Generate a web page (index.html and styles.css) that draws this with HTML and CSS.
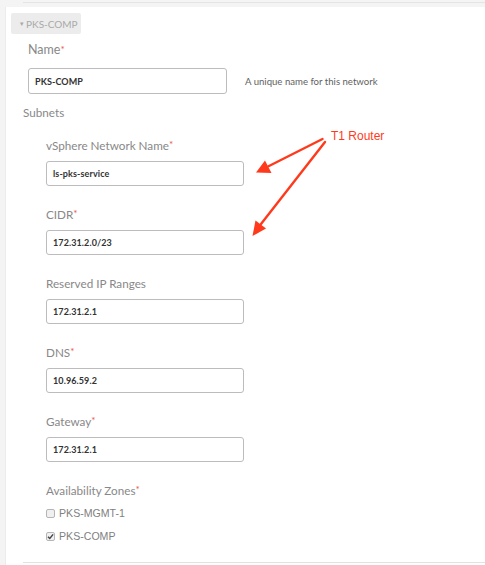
FILE: index.html
```html
<!DOCTYPE html>
<html>
<head>
<meta charset="utf-8">
<link rel="stylesheet" href="styles.css">
</head>
<body>
<div class="page">
  <div class="prev"></div>
  <div class="panel">
    <div class="toggle"><span class="caret">&#9662;</span>PKS-COMP</div>
    <div class="field name-field">
      <div class="label">Name<span class="req">*</span></div>
      <div class="row">
        <div class="input wide">PKS-COMP</div>
        <div class="help">A unique name for this network</div>
      </div>
    </div>
    <div class="subnets-title">Subnets</div>
    <div class="subnets">
      <div class="field">
        <div class="label">vSphere Network Name<span class="req">*</span></div>
        <div class="input">ls-pks-service</div>
      </div>
      <div class="field">
        <div class="label">CIDR<span class="req">*</span></div>
        <div class="input">172.31.2.0/23</div>
      </div>
      <div class="field">
        <div class="label">Reserved IP Ranges</div>
        <div class="input">172.31.2.1</div>
      </div>
      <div class="field">
        <div class="label">DNS<span class="req">*</span></div>
        <div class="input">10.96.59.2</div>
      </div>
      <div class="field">
        <div class="label">Gateway<span class="req">*</span></div>
        <div class="input">172.31.2.1</div>
      </div>
      <div class="zones">
        <div class="label">Availability Zones<span class="req">*</span></div>
        <div class="check"><span class="box"></span>PKS-MGMT-1</div>
        <div class="check"><span class="box checked"><svg viewBox="0 0 10 10" width="9" height="9"><path d="M2.2 5.2 L4.2 7.2 L7.9 2.6" fill="none" stroke="#444" stroke-width="1.6"/></svg></span>PKS-COMP</div>
      </div>
    </div>
    <div class="bottom-line"></div>
  </div>
  <div class="annotation">T1 Router</div>
  <svg class="arrows" width="485" height="565" viewBox="0 0 485 565">
    <line x1="322.5" y1="139" x2="268" y2="166.5" stroke="#ff3a1c" stroke-width="2.4" stroke-linecap="round"/>
    <polygon points="256,172.5 265,160.5 271.5,173" fill="#ff3a1c"/>
    <line x1="325" y1="142" x2="261" y2="224" stroke="#ff3a1c" stroke-width="2.4" stroke-linecap="round"/>
    <polygon points="252.5,236 255.5,220.5 266,228.5" fill="#ff3a1c"/>
  </svg>
</div>
</body>
</html>
```
FILE: styles.css
```css
* { box-sizing: border-box; }
html, body { margin: 0; padding: 0; }
body {
  width: 485px;
  height: 565px;
  overflow: hidden;
  background: #f4f4f4;
  font-family: Lato, "Open Sans", sans-serif;
}
.page {
  position: relative;
  height: 565px;
}
.prev {
  margin-left: 23px;
  height: 3px;
  border-bottom: 1px solid #e4e4e4;
  margin-bottom: 4px;
}
.panel {
  margin-left: 5px;
  background: #fff;
  height: 558px;
  padding: 6px 0 0 5px;
  border-left: 1px solid #ececec;
}
.toggle {
  display: flex;
  align-items: center;
  height: 21px;
  width: 70px;
  padding-left: 9px;
  background: #ececec;
  border-radius: 2px;
  color: #a9a9a9;
  font-size: 10px;
}
.caret {
  font-size: 7px;
  margin-right: 2px;
}
.label {
  font-size: 11.7px;
  line-height: 16px;
  color: #888;
  height: 16px;
}
.req {
  color: #e8584a;
  font-size: 10px;
  vertical-align: top;
  position: relative;
  top: -1px;
}
.name-field {
  margin-top: 8px;
  margin-left: 17px;
}
.name-field .label {
  margin-bottom: 10px;
  font-size: 12.5px;
}
.row {
  display: flex;
  align-items: center;
}
.input {
  width: 198px;
  height: 25px;
  border: 1px solid #bcbcbc;
  border-radius: 3px;
  padding-left: 6px;
  display: flex;
  align-items: center;
  font-size: 9px;
  font-weight: bold;
  color: #333;
  letter-spacing: 0.1px;
}
.input.wide {
  width: 199px;
  height: 26px;
}
.help {
  margin-left: 18px;
  font-size: 9.6px;
  color: #5f5f5f;
}
.subnets-title {
  margin-top: 10px;
  margin-left: 12px;
  font-size: 11.7px;
  line-height: 16px;
  color: #888;
}
.subnets {
  margin-left: 35px;
  margin-top: 17px;
}
.subnets .field .label { margin-bottom: 8px; }
.subnets .field .input { margin-bottom: 20px; }
.zones .label { margin-bottom: 7px; }
.check {
  display: flex;
  align-items: center;
  height: 16px;
  margin-bottom: 7px;
  font-family: "Liberation Sans", Arial, sans-serif;
  font-size: 10.6px;
  color: #808080;
}
.box {
  width: 9px;
  height: 9px;
  border: 1px solid #b5b5b5;
  border-radius: 2px;
  background: #f0f0f0;
  margin-right: 4px;
  position: relative;
}
.box svg {
  position: absolute;
  left: -1px;
  top: -1px;
}
.bottom-line {
  margin-left: 12px;
  margin-top: 18px;
  border-top: 1px solid #e2e2e2;
}
.annotation {
  position: absolute;
  left: 331px;
  top: 129px;
  font-family: "Liberation Sans", Arial, sans-serif;
  font-size: 12px;
  color: #ff3a1c;
}
.arrows {
  position: absolute;
  left: 0;
  top: 0;
  pointer-events: none;
}
```
